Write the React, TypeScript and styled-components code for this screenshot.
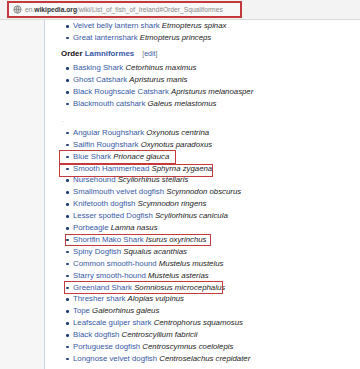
import styled, { createGlobalStyle } from "styled-components";

type Species = {
  name: string;
  latin: string;
  mark?: { left: number; width: number; top: number; height: number };
};

const lantern: Species[] = [
  { name: "Velvet belly lantern shark", latin: "Etmopterus spinax" },
  { name: "Great lanternshark", latin: "Etmopterus princeps" },
];

const lamniformes: Species[] = [
  { name: "Basking Shark", latin: "Cetorhinus maximus" },
  { name: "Ghost Catshark", latin: "Apristurus manis" },
  { name: "Black Roughscale Catshark", latin: "Apristurus melanoasper" },
  { name: "Blackmouth catshark", latin: "Galeus melastomus" },
];

const others: Species[] = [
  { name: "Angular Roughshark", latin: "Oxynotus centrina" },
  { name: "Sailfin Roughshark", latin: "Oxynotus paradoxus" },
  { name: "Blue Shark", latin: "Prionace glauca", mark: { left: -2, width: 117, top: -1, height: 14 } },
  { name: "Smooth Hammerhead", latin: "Sphyrna zygaena", mark: { left: -2, width: 154, top: 1, height: 13 } },
  { name: "Nursehound", latin: "Scyliorhinus stellaris" },
  { name: "Smallmouth velvet dogfish", latin: "Scymnodon obscurus" },
  { name: "Knifetooth dogfish", latin: "Scymnodon ringens" },
  { name: "Lesser spotted Dogfish", latin: "Scyliorhinus canicula" },
  { name: "Porbeagle", latin: "Lamna nasus" },
  { name: "Shortfin Mako Shark", latin: "Isurus oxyrinchus", mark: { left: 4, width: 146, top: 0, height: 12 } },
  { name: "Spiny Dogfish", latin: "Squalus acanthias" },
  { name: "Common smooth-hound", latin: "Mustelus mustelus" },
  { name: "Starry smooth-hound", latin: "Mustelus asterias" },
  { name: "Greenland Shark", latin: "Somniosus microcephalus", mark: { left: 3, width: 159, top: -1, height: 13 } },
  { name: "Thresher shark", latin: "Alopias vulpinus" },
  { name: "Tope", latin: "Galeorhinus galeus" },
  { name: "Leafscale gulper shark", latin: "Centrophorus squamosus" },
  { name: "Black dogfish", latin: "Centroscyllium fabricii" },
  { name: "Portuguese dogfish", latin: "Centroscymnus coelolepis" },
  { name: "Longnose velvet dogfish", latin: "Centroselachus crepidater" },
];

const GlobalStyle = createGlobalStyle`
  html, body {
    margin: 0;
    padding: 0;
    background: #ffffff;
  }
  body {
    font-family: "Liberation Sans", Arial, sans-serif;
  }
`;

/* browser chrome */
const AddressBar = styled.div`
  height: 20px;
  background: #f3f3f3;
  border-bottom: 1px solid #dadada;
  padding: 1px 0 0 7px;
  box-sizing: border-box;
`;

const AddressField = styled.div`
  display: flex;
  align-items: center;
  gap: 3px;
  width: 235px;
  height: 17px;
  box-sizing: border-box;
  border: 2px solid #c4393c;
  background: #f8f8f8;
  padding-left: 4px;
`;

const Url = styled.span`
  font-family: "Liberation Sans", Arial, sans-serif;
  font-size: 6.7px;
  color: #8a8a8a;
  white-space: nowrap;
`;

const Host = styled.span`
  color: #333333;
  font-weight: bold;
`;

/* page */
const Page = styled.div`
  display: flex;
  min-height: 349px;
`;

const Sidebar = styled.div`
  width: 44px;
  background: #f6f6f6;
  border-right: 1px solid #c8d6e5;
`;

const Article = styled.div`
  flex: 1;
  padding-left: 16px;
  font-size: 7.8px;
  color: #222222;
`;

const SpeciesList = styled.ul<{ $mt: number }>`
  list-style: none;
  margin: ${(p) => p.$mt}px 0 0 0;
  padding: 0;
`;

const Item = styled.li`
  position: relative;
  line-height: 11.9px;
  height: 11.9px;
  padding-left: 12px;
  white-space: nowrap;

  &::before {
    content: "";
    position: absolute;
    left: 5px;
    top: 5px;
    width: 2.5px;
    height: 2.5px;
    border-radius: 50%;
    background: #1f3f78;
  }
`;

const Common = styled.a`
  color: #3659a5;
  text-decoration: none;
`;

const Latin = styled.i`
  color: #222222;
`;

const Callout = styled.span`
  position: absolute;
  box-sizing: border-box;
  border: 1.6px solid #c4393c;
  pointer-events: none;
`;

const Heading = styled.div`
  margin-top: 4.2px;
  line-height: 12px;
  font-size: 7.9px;
  font-weight: bold;
  color: #111111;
`;

const HeadLink = styled.a`
  color: #3659a5;
  text-decoration: none;
`;

const Edit = styled.span`
  font-weight: normal;
  font-size: 7px;
  color: #777777;
  margin-left: 8px;
`;

const Stray = styled.p`
  margin: 4.1px 0 0 1px;
  line-height: 11.9px;
  font-size: 7px;
  color: #bbbbbb;
`;

const Globe = () => (
  <svg width="9" height="9" viewBox="0 0 16 16" fill="none" stroke="#8c8c8c" strokeWidth="1.6">
    <circle cx="8" cy="8" r="6.5" fill="#d6d6d6" />
    <path d="M1.5 8h13M8 1.5c-2.5 2.5-2.5 10.5 0 13M8 1.5c2.5 2.5 2.5 10.5 0 13" />
  </svg>
);

const Row = ({ s }: { s: Species }) => (
  <Item>
    <Common href="#">{s.name}</Common> <Latin>{s.latin}</Latin>
    {s.mark && (
      <Callout
        style={{
          left: s.mark.left,
          width: s.mark.width,
          top: s.mark.top,
          height: s.mark.height,
        }}
      />
    )}
  </Item>
);

const App = () => {
  return (
    <>
      <GlobalStyle />
      <AddressBar>
        <AddressField>
          <Globe />
          <Url>
            en.<Host>wikipedia.org</Host>/wiki/List_of_fish_of_Ireland#Order_Squaliformes
          </Url>
        </AddressField>
      </AddressBar>
      <Page>
        <Sidebar />
        <Article>
          <SpeciesList $mt={0}>
            {lantern.map((s) => (
              <Row key={s.name} s={s} />
            ))}
          </SpeciesList>
          <Heading>
            Order <HeadLink href="#">Lamniformes</HeadLink>
            <Edit>
              [<HeadLink href="#" style={{ fontWeight: "normal" }}>edit</HeadLink>]
            </Edit>
          </Heading>
          <SpeciesList $mt={2.3}>
            {lamniformes.map((s) => (
              <Row key={s.name} s={s} />
            ))}
          </SpeciesList>
          <Stray>.</Stray>
          <SpeciesList $mt={1.1}>
            {others.map((s) => (
              <Row key={s.name} s={s} />
            ))}
          </SpeciesList>
        </Article>
      </Page>
    </>
  );
};

export default App;
